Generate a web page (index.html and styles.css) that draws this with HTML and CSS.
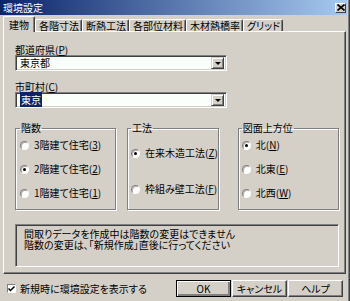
FILE: index.html
```html
<!DOCTYPE html>
<html lang="ja">
<head>
  <meta charset="UTF-8" />
  <title>環境設定</title>
  <link rel="stylesheet" href="styles.css">
</head>
<body>
  <div class="window">
    <div class="frame">
      <div class="titlebar">
        <span class="title">環境設定</span>
        <span class="close">
          <svg width="8" height="7" viewBox="0 0 8 7"><path d="M0.5 0.5 L7.5 6.5 M7.5 0.5 L0.5 6.5" stroke="#000" stroke-width="1.6"/></svg>
        </span>
      </div>

      <div class="tabs">
        <div class="tab active">建物</div>
        <div class="tab">各階寸法</div>
        <div class="tab">断熱工法</div>
        <div class="tab">各部位材料</div>
        <div class="tab">木材熱橋率</div>
        <div class="tab">グリッド</div>
      </div>

      <div class="panel">
        <div class="label first">都道府県(<u>P</u>)</div>
        <div class="combo">
          <div class="combo-field">東京都</div>
          <div class="combo-btn"><span class="arrow"></span></div>
        </div>

        <div class="label">市町村(<u>C</u>)</div>
        <div class="combo">
          <div class="combo-field"><span class="sel">東京</span></div>
          <div class="combo-btn"><span class="arrow"></span></div>
        </div>

        <div class="groups">
          <fieldset class="group g-floors">
            <legend>階数</legend>
            <div class="opt"><span class="radio"></span>3階建て住宅(<u>3</u>)</div>
            <div class="opt"><span class="radio on"></span>2階建て住宅(<u>2</u>)</div>
            <div class="opt"><span class="radio"></span>1階建て住宅(<u>1</u>)</div>
          </fieldset>
          <fieldset class="group g-method">
            <legend>工法</legend>
            <div class="opt"><span class="radio on"></span>在来木造工法(<u>Z</u>)</div>
            <div class="opt"><span class="radio"></span>枠組み壁工法(<u>F</u>)</div>
          </fieldset>
          <fieldset class="group g-dir">
            <legend>図面上方位</legend>
            <div class="opt"><span class="radio on"></span>北(<u>N</u>)</div>
            <div class="opt"><span class="radio"></span>北東(<u>E</u>)</div>
            <div class="opt"><span class="radio"></span>北西(<u>W</u>)</div>
          </fieldset>
        </div>

        <div class="note">間取りデータを作成中は階数の変更はできません<br>階数の変更は、「新規作成」直後に行ってください</div>
      </div>

      <div class="footer">
        <div class="check">
          <span class="box">
            <svg width="7" height="7" viewBox="0 0 7 7"><path d="M0.5 3.5 L2.5 5.5 L6.5 1.5" fill="none" stroke="#000" stroke-width="1.5"/></svg>
          </span>
          新規時に環境設定を表示する
        </div>
        <div class="buttons">
          <button class="btn default">OK</button>
          <button class="btn">キャンセル</button>
          <button class="btn">ヘルプ</button>
        </div>
      </div>
    </div>
  </div>
</body>
</html>
```

FILE: styles.css
```css
:root {
  --face: #d4d0c8;
  --shadow: #808080;
  --dark: #404040;
  --light: #ffffff;
  --navy: #0a246a;
}

* {
  box-sizing: border-box;
  margin: 0;
  padding: 0;
}

body {
  background: var(--face);
  font-family: "Noto Sans CJK JP", sans-serif;
  font-size: 10px;
  line-height: 10px;
  font-feature-settings: "palt";
  color: #000;
}

.window {
  width: 350px;
  height: 301px;
  background: var(--face);
  border-right: 1px solid var(--dark);
}

.frame {
  height: 100%;
  border-right: 1px solid var(--shadow);
  padding-right: 1px;
}

/* title bar */
.titlebar {
  height: 15px;
  background: linear-gradient(to right, var(--navy), #a6caf0);
  display: flex;
  align-items: center;
  justify-content: space-between;
  padding: 0 1px 0 3px;
}

.title {
  color: #fff;
  font-size: 10px;
}

.close {
  width: 11px;
  height: 10px;
  background: var(--face);
  border: 1px solid;
  border-color: var(--light) var(--dark) var(--dark) var(--light);
  display: flex;
  align-items: center;
  justify-content: center;
}

/* tabs */
.tabs {
  display: flex;
  align-items: flex-end;
  height: 16px;
  padding-left: 3px;
}

.tab {
  height: 12px;
  padding: 1px 2px 0 3px;
  border-top: 1px solid var(--light);
  border-left: 1px solid var(--light);
  border-right: 1px solid var(--dark);
  box-shadow: inset -1px 0 var(--shadow);
  border-radius: 2px 2px 0 0;
  white-space: nowrap;
}

.tab.active {
  height: 16px;
  padding: 3px 5px 0 5px;
  margin-bottom: -1px;
  background: var(--face);
  position: relative;
  z-index: 1;
}

/* tab page */
.panel {
  margin: 0 1px 0 3px;
  height: 243px;
  border-top: 1px solid var(--light);
  border-left: 1px solid var(--light);
  border-right: 1px solid var(--dark);
  border-bottom: 1px solid var(--dark);
  box-shadow: inset -1px -1px var(--shadow);
  padding-left: 11px;
}

.label {
  margin-top: 11px;
  height: 10px;
}

.label.first {
  margin-top: 13px;
}

.combo {
  width: 212px;
  height: 16px;
  display: flex;
  border: 1px solid;
  border-color: var(--shadow) var(--light) var(--light) var(--shadow);
  box-shadow: inset 1px 1px var(--dark), inset -1px -1px var(--face);
  background: #fbfffb;
  padding: 2px;
}

.combo-field {
  flex: 1;
  padding-left: 2px;
  line-height: 10px;
}

.sel {
  background: var(--navy);
  color: #fff;
  padding: 0 1px;
}

.combo-btn {
  width: 13px;
  height: 12px;
  margin-top: -1px;
  background: var(--face);
  border: 1px solid;
  border-color: var(--face) var(--dark) var(--dark) var(--face);
  box-shadow: inset 1px 1px var(--light), inset -1px -1px var(--shadow);
  display: flex;
  align-items: center;
  justify-content: center;
}

.arrow {
  width: 0;
  height: 0;
  border-left: 3px solid transparent;
  border-right: 3px solid transparent;
  border-top: 3px solid #000;
}

/* group boxes */
.groups {
  display: flex;
  margin-top: 15px;
}

.group {
  height: 87px;
  border: 1px solid var(--shadow);
  box-shadow: inset 1px 1px var(--light), 1px 1px var(--light);
  padding: 0 0 0 3px;
}

.group legend {
  padding: 0 1px;
  line-height: 10px;
  height: 10px;
}

.g-floors {
  width: 101px;
  padding-left: 4px;
}

.g-method {
  width: 91px;
  margin-left: 11px;
}

.g-dir {
  width: 101px;
  margin-left: 19px;
}

.opt {
  display: flex;
  align-items: center;
  height: 12px;
  margin-top: 12px;
  white-space: nowrap;
}

.g-floors .opt:first-of-type,
.g-dir .opt:first-of-type {
  margin-top: 6px;
}

.g-method .opt:first-of-type {
  margin-top: 14px;
}

.g-method .opt + .opt {
  margin-top: 24px;
}

.radio {
  width: 9px;
  height: 9px;
  border-radius: 50%;
  border: 1px solid;
  border-color: var(--shadow) var(--light) var(--light) var(--shadow);
  background: #fff;
  box-shadow: inset 1px 1px #b8b4ac;
  margin-right: 5px;
  display: flex;
  align-items: center;
  justify-content: center;
}

.radio.on::after {
  content: "";
  width: 3px;
  height: 3px;
  border-radius: 50%;
  background: #000;
}

/* message box */
.note {
  margin-top: 14px;
  width: 324px;
  height: 43px;
  border: 1px solid;
  border-color: var(--shadow) var(--light) var(--light) var(--shadow);
  box-shadow: inset 1px 1px var(--dark);
  padding: 3px 0 0 8px;
  line-height: 11px;
}

/* bottom row */
.footer {
  display: flex;
  align-items: center;
  margin-top: 6px;
  padding: 0 4px 0 7px;
}

.check {
  display: flex;
  align-items: center;
}

.box {
  width: 9px;
  height: 9px;
  border: 1px solid;
  border-color: var(--shadow) var(--light) var(--light) var(--shadow);
  background: #fff;
  margin-right: 4px;
  display: flex;
  align-items: center;
  justify-content: center;
}

.buttons {
  margin-left: auto;
  display: flex;
  gap: 1px;
}

.btn {
  width: 55px;
  height: 17px;
  font-family: inherit;
  font-size: 10px;
  line-height: 10px;
  font-feature-settings: "palt";
  background: var(--face);
  color: #000;
  border: 1px solid;
  border-color: var(--light) var(--dark) var(--dark) var(--light);
  box-shadow: inset -1px -1px var(--shadow);
}

.btn.default {
  border: 1px solid #000;
  box-shadow: inset 1px 1px var(--light), inset -2px -2px var(--shadow);
}
```
